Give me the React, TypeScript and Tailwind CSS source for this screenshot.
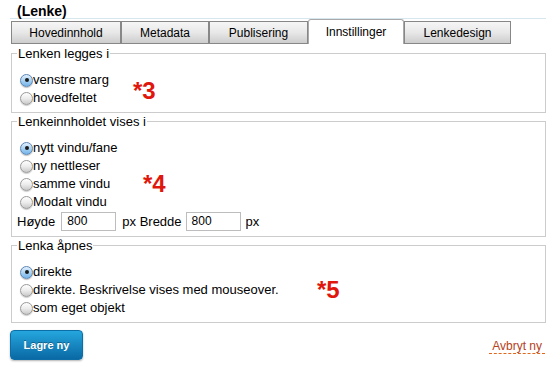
import React from "react";

function Radio({ checked }: { checked?: boolean }) {
  if (checked) {
    return (
      <span className="inline-flex items-center justify-center w-[13px] h-[13px] rounded-full border border-[#5d86b3] bg-linear-to-b from-[#e2f1fd] via-[#a9d2f3] to-[#74b4ea] shadow-[0_1px_1px_rgba(0,0,0,0.25)] shrink-0">
        <span className="block w-[4px] h-[4px] rounded-full bg-[#1b1b1b]" />
      </span>
    );
  }
  return (
    <span className="inline-block w-[13px] h-[13px] rounded-full border border-[#9a9a9a] bg-linear-to-b from-[#ffffff] via-[#ececec] to-[#c9c9c9] shadow-[0_1px_1px_rgba(0,0,0,0.2)] shrink-0" />
  );
}

function Row({ checked, label }: { checked?: boolean; label: string }) {
  return (
    <div className="flex items-center h-[18px] pl-[3px] leading-[18px]">
      <Radio checked={checked} />
      <span>{label}</span>
    </div>
  );
}

function Tab({ label, w, active }: { label: string; w: string; active?: boolean }) {
  if (active) {
    return (
      <div className={`${w} h-[25px] flex items-center justify-center bg-white border border-b-0 border-[#a9a9a9] rounded-t-[3px] text-[12px]`}>
        {label}
      </div>
    );
  }
  return (
    <div className={`${w} h-[23px] flex items-center justify-center bg-linear-to-b from-[#f6f6f6] via-[#e8e8e8] to-[#cdcdcd] border border-[#878787] text-[12px]`}>
      {label}
    </div>
  );
}

function Star({ n, cls }: { n: string; cls: string }) {
  return (
    <span className={`absolute ${cls} text-[24px] leading-[24px] font-bold text-[#e0170d]`}>
      *{n}
    </span>
  );
}

export default function App() {
  return (
    <div className="w-[560px] h-[370px] bg-white text-black font-['Liberation_Sans',Arial,sans-serif] text-[13px] overflow-hidden">
      <div className="ml-[10px] w-[536px] h-[19px] border-b border-[#d6e7ee]">
        <div className="pl-[7px] pt-[3px] text-[14px] leading-[16px] font-bold">(Lenke)</div>
      </div>
      <div className="flex items-end h-[25px] ml-[11px]">
        <Tab label="Hovedinnhold" w="w-[110px]" />
        <Tab label="Metadata" w="w-[88px]" />
        <Tab label="Publisering" w="w-[99px]" />
        <Tab label="Innstillinger" w="w-[96px]" active />
        <Tab label="Lenkedesign" w="w-[107px]" />
      </div>

      <fieldset className="mt-[2px] ml-[11px] w-[535px] border border-[#cccccc] px-[5px] pb-[5px]">
        <legend className="px-[1px] leading-[15px]">Lenken legges i</legend>
        <div className="relative pt-[10px]">
          <Row checked label="venstre marg" />
          <Row label="hovedfeltet" />
          <Star n="3" cls="left-[116px] top-[18px]" />
        </div>
      </fieldset>

      <fieldset className="mt-[1px] ml-[11px] w-[535px] border border-[#cccccc] px-[5px] pb-[5px]">
        <legend className="px-[1px] leading-[15px]">Lenkeinnholdet vises i</legend>
        <div className="relative pt-[10px]">
          <Row checked label="nytt vindu/fane" />
          <Row label="ny nettleser" />
          <Row label="samme vindu" />
          <Row label="Modalt vindu" />
          <div className="flex items-center h-[19px] mt-[1px]">
            <span>Høyde</span>
            <div className="ml-[6px] w-[55px] h-[19px] border border-[#bdbdbd] text-[12px] leading-[17px] pl-[5px]">800</div>
            <span className="ml-[6px]">px Bredde</span>
            <div className="ml-[4px] w-[55px] h-[19px] border border-[#bdbdbd] text-[12px] leading-[17px] pl-[5px]">800</div>
            <span className="ml-[5px]">px</span>
          </div>
          <Star n="4" cls="left-[126px] top-[43px]" />
        </div>
      </fieldset>

      <fieldset className="mt-[1px] ml-[11px] w-[535px] border border-[#cccccc] px-[5px] pb-[5px]">
        <legend className="px-[1px] leading-[15px]">Lenka åpnes</legend>
        <div className="relative pt-[10px]">
          <Row checked label="direkte" />
          <Row label="direkte. Beskrivelse vises med mouseover." />
          <Row label="som eget objekt" />
          <Star n="5" cls="left-[300px] top-[25px]" />
        </div>
      </fieldset>

      <div className="mt-[7px] ml-[10px] w-[536px] flex items-center justify-between">
        <button className="w-[73px] h-[30px] rounded-[4px] border border-[#0c6ea6] bg-linear-to-b from-[#25a6de] to-[#0a69a4] text-white font-bold text-[11px] shadow-[0_1px_2px_rgba(0,0,0,0.3)] [text-shadow:0_-1px_0_rgba(0,0,0,0.35)]">
          Lagre ny
        </button>
        <span className="mt-[3px] mr-px px-[3px] text-[12px] leading-[14px] text-[#b4421c] border-b border-dashed border-[#e2661c]">
          Avbryt ny
        </span>
      </div>
    </div>
  );
}
